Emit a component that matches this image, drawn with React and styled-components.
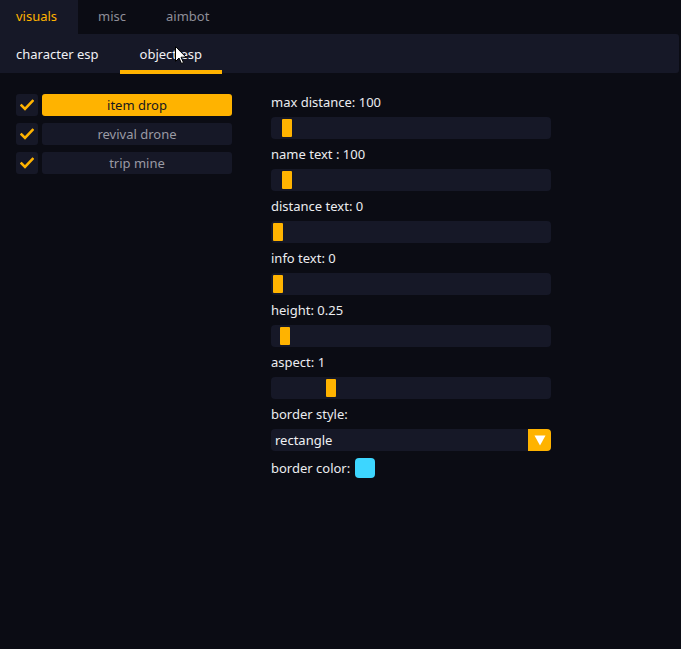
import React from "react";
import styled, { createGlobalStyle } from "styled-components";

const Global = createGlobalStyle`
  html, body { margin: 0; padding: 0; background: #0b0c14; }
  body { font-family: "Noto Sans", "Open Sans", sans-serif; font-size: 13px; color: #e8e8ec; }
  #root { min-height: 100vh; }
`;

const ORANGE = "#ffb300";
const PANEL = "#161827";

const Page = styled.div`
  position: relative;
  min-height: 649px;
  background: #0b0c14;
`;

const TopBar = styled.div`
  display: flex;
  height: 34px;
`;

const TopTab = styled.div`
  display: flex;
  align-items: center;
  padding: 0 20px 2px ${p => (p.$first ? 16 : 20)}px;
  min-width: ${p => (p.$first ? 78 : 0)}px;
  box-sizing: border-box;
  background: ${p => (p.$active ? PANEL : "transparent")};
  color: ${p => (p.$active ? ORANGE : "#8e8e98")};
`;

const SubBar = styled.div`
  display: flex;
  height: 39px;
  width: 679px;
  background: ${PANEL};
  border-radius: 0 3px 3px 0;
`;

const SubTab = styled.div`
  position: relative;
  display: flex;
  align-items: center;
  padding: 0 ${p => (p.$first ? 21 : 20)}px 0 ${p => (p.$first ? 16 : 20)}px;
  color: #f0f0f4;
  ${p =>
    p.$active &&
    `&::after { content: ""; position: absolute; left: 0; right: 0; bottom: -1px; height: 4px; background: ${ORANGE}; }`}
`;

const Body = styled.div`
  display: flex;
  padding-top: 21px;
`;

const LeftCol = styled.div`
  display: flex;
  flex-direction: column;
  gap: 7px;
  padding-left: 16px;
  width: 216px;
`;

const ItemRow = styled.div`
  display: flex;
  gap: 4px;
  height: 22px;
`;

const Check = styled.div`
  width: 22px;
  height: 22px;
  border-radius: 3px;
  background: ${PANEL};
  display: flex;
  align-items: center;
  justify-content: center;
`;

const ItemButton = styled.div`
  flex: 1;
  border-radius: 3px;
  background: ${p => (p.$active ? ORANGE : PANEL)};
  color: ${p => (p.$active ? "#17171f" : "#9a9aa4")};
  display: flex;
  align-items: center;
  justify-content: center;
`;

const RightCol = styled.div`
  display: flex;
  flex-direction: column;
  gap: 4px;
  margin-left: 39px;
  margin-top: -3px;
  width: 280px;
`;

const Label = styled.div`
  height: 22px;
  line-height: 22px;
  color: #ececf0;
  display: flex;
  align-items: center;
  gap: 6px;
`;

const Track = styled.div`
  position: relative;
  height: 22px;
  border-radius: 4px;
  background: ${PANEL};
`;

const Handle = styled.div`
  position: absolute;
  top: 2px;
  width: 10px;
  height: 18px;
  background: ${ORANGE};
  border-radius: 1px;
`;

const Select = styled.div`
  display: flex;
  height: 22px;
  border-radius: 4px;
  background: ${PANEL};
  overflow: hidden;
`;

const SelectText = styled.div`
  flex: 1;
  padding-left: 4px;
  display: flex;
  align-items: center;
  color: #f0f0f4;
`;

const SelectArrow = styled.div`
  width: 23px;
  background: ${ORANGE};
  display: flex;
  align-items: center;
  justify-content: center;
`;

const ColorRow = styled(Label)`
  height: 26px;
  gap: 5px;
`;

const Swatch = styled.div`
  width: 20px;
  height: 20px;
  border-radius: 4px;
  background: ${p => p.$color};
`;

const Cursor = styled.svg`
  position: absolute;
  left: 175px;
  top: 46px;
`;

const CheckIcon = () => (
  <svg width="14" height="12" viewBox="0 0 14 12">
    <path d="M1.5 6.5 L5 10 L12.5 2" fill="none" stroke={ORANGE} strokeWidth="2.6" strokeLinecap="square" />
  </svg>
);

const sliders = [
  { label: "max distance: 100", v: 100, max: 3000 },
  { label: "name text : 100", v: 100, max: 3000 },
  { label: "distance text: 0", v: 0, max: 3000 },
  { label: "info text: 0", v: 0, max: 3000 },
  { label: "height: 0.25", v: 0.25, max: 10 },
  { label: "aspect: 1", v: 1, max: 5 },
];

const items = [
  { name: "item drop", active: true },
  { name: "revival drone" },
  { name: "trip mine" },
];

export default function App() {
  return (
    <Page>
      <Global />
      <TopBar>
        <TopTab $first $active>visuals</TopTab>
        <TopTab>misc</TopTab>
        <TopTab>aimbot</TopTab>
      </TopBar>
      <SubBar>
        <SubTab $first>character esp</SubTab>
        <SubTab $active>object esp</SubTab>
      </SubBar>
      <Body>
        <LeftCol>
          {items.map(it => (
            <ItemRow key={it.name}>
              <Check><CheckIcon /></Check>
              <ItemButton $active={it.active}>{it.name}</ItemButton>
            </ItemRow>
          ))}
        </LeftCol>
        <RightCol>
          {sliders.map(s => (
            <React.Fragment key={s.label}>
              <Label>{s.label}</Label>
              <Track>
                <Handle style={{ left: 2 + (s.v / s.max) * 266 }} />
              </Track>
            </React.Fragment>
          ))}
          <Label>border style:</Label>
          <Select>
            <SelectText>rectangle</SelectText>
            <SelectArrow>
              <svg width="12" height="11" viewBox="0 0 12 11">
                <path d="M0.5 0.5 H11.5 L6 10.5 Z" fill="#ffffff" />
              </svg>
            </SelectArrow>
          </Select>
          <ColorRow>
            border color:
            <Swatch $color="#3dd6ff" />
          </ColorRow>
        </RightCol>
      </Body>
      <Cursor width="12" height="19" viewBox="0 0 12 19">
        <path d="M0.5 0.5 V15.5 L4 12 L6.5 17.5 L8.5 16.5 L6 11.2 H11 Z" fill="#ffffff" stroke="#000000" strokeWidth="1" />
      </Cursor>
    </Page>
  );
}
